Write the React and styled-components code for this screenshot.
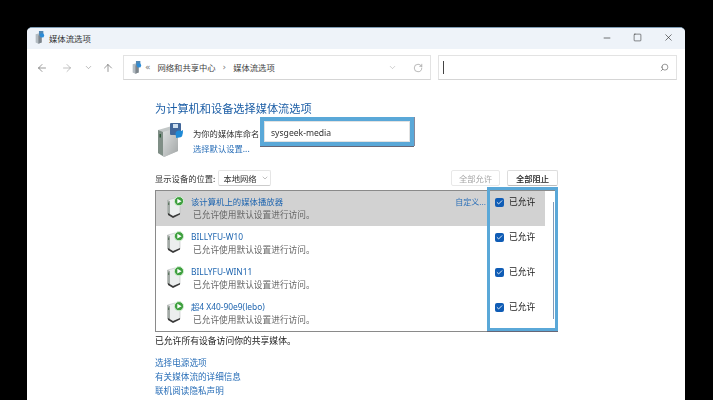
import React from 'react';
import styled, { createGlobalStyle } from 'styled-components';
import { ArrowLeft, ArrowRight, ArrowUp, ChevronDown, RotateCw, Search, Minus, Square, X, Check } from 'lucide-react';

const Global = createGlobalStyle`
  html, body { margin: 0; padding: 0; background: #000; height: 400px; overflow: hidden; }
  * { box-sizing: border-box; }
`;
const FONT = `"Noto Sans CJK SC", "Noto Sans", sans-serif`;

const Page = styled.div`
  width: 713px; height: 400px; padding: 27px 28px 0 27px; background: #000; overflow: hidden;
  font-family: ${FONT}; color: #222;
`;
const Win = styled.div`
  width: 658px; height: 373px; background: #fff; border-radius: 5px 5px 0 0; overflow: hidden;
  border-top: 1px solid #7f9db5; display: flex; flex-direction: column; filter: blur(0.3px);
`;
const TitleBar = styled.div`
  height: 21px; background: #eef3f9; display: flex; align-items: center; padding: 0 11px 2px 7px; flex: none;
`;
const TitleText = styled.span`font-size: 8.4px; line-height: 12px; margin-left: 4px; color: #333; flex: 1;`;
const WinBtns = styled.div`display: flex; align-items: center; gap: 21px; color: #222;`;

const Nav = styled.div`
  height: 25px; margin-top: 6px; display: flex; align-items: center; padding: 0 8px 0 9px; flex: none;
`;
const NavBtns = styled.div`width: 87px; display: flex; align-items: center; gap: 11px; flex: none; color: #666;`;
const NavIcon = styled.span`display: flex; color: ${p => p.$c || '#555'}; margin-left: ${p => p.$ml || 0}px;`;
const AddrBar = styled.div`
  width: 308px; height: 25px; border: 1px solid #e3e3e3; border-bottom-color: #d5d5d5; display: flex; align-items: center;
  padding: 0 7px 0 7px; font-size: 8.3px; color: #444; flex: none;
`;
const Crumbs = styled.div`display: flex; align-items: center; flex: 1; gap: 6px; line-height: 12px;`;
const Sep = styled.span`font-size: 9px; color: #777; font-family: "DejaVu Sans", sans-serif; margin: 0 ${p => p.$mr || 0}px 0 ${p => p.$ml || 0}px;`;
const SearchBox = styled.div`
  width: 239px; height: 25px; margin-left: 7px; border: 1px solid #e3e3e3; border-bottom-color: #d5d5d5; display: flex;
  align-items: center; justify-content: space-between; padding: 0 7px 0 4px; color: #555;
`;
const Caret = styled.span`width: 1px; height: 13px; background: #444;`;
const FlippedIcon = styled(NavIcon)`transform: scaleX(-1);`;

const Content = styled.div`padding: 20px 127px 0 128px; display: flex; flex-direction: column; position: relative; flex: 1;`;
const Heading = styled.h1`margin: 0; font-size: 11.2px; font-weight: 400; line-height: 16px; color: #1c5ea6;`;
const NameRow = styled.div`display: flex; margin-top: 1px; height: 45px; padding-left: 2px;`;
const BigIconSlot = styled.div`margin-top: 6px; flex: none; display: flex;`;
const NameText = styled.div`margin-left: 8px; padding-top: 10px; display: flex; flex-direction: column; width: 67px; flex: none;`;
const Small = styled.span`font-size: 8.3px; line-height: 12px; white-space: nowrap; color: #333;`;
const NameLink = styled.a`font-size: 8.3px; line-height: 12px; margin-top: 3px; color: #2a6fb8; white-space: nowrap;`;
const NameInputWrap = styled.div`
  width: 154px; height: 29px; border: 4px solid #5aa8d8; background: #fff; box-shadow: 0 1px 0 #667, 1px 0 0 #889;
  display: flex; align-items: center; padding: 2px 0 0 7px; font-size: 8.6px; color: #333; font-family: "Noto Sans", sans-serif;
  outline: 1px solid #e2e2e2; outline-offset: -5px;
`;
const LocRow = styled.div`display: flex; align-items: center; height: 16px; margin-top: 8px;`;
const LocSelect = styled.div`
  margin-left: 3px; width: 53px; height: 16px; border: 1px solid #e5e5e5; border-bottom-color: #ccc; border-radius: 2px;
  display: flex; align-items: center; justify-content: space-between; padding: 0 1px 0 4px; font-size: 8.3px; color: #333; line-height: 12px;
`;
const BtnSpacer = styled.div`flex: 1;`;
const Btn = styled.div`
  height: 16px; width: ${p => p.$w}px; margin-left: ${p => p.$ml || 0}px; border: 1px solid ${p => p.$off ? '#e8e8e8' : '#ddd'};
  border-bottom-color: ${p => p.$off ? '#e8e8e8' : '#bbb'}; border-radius: 2px; font-size: 8.3px; line-height: 14px; text-align: center;
  color: ${p => p.$off ? '#a5a5a5' : '#222'}; font-weight: ${p => p.$off ? 400 : 500};
`;
const List = styled.div`
  margin-top: 4px; width: 403px; height: 142px; border: 1px solid #8a8a8a; position: relative;
`;
const Row = styled.div`
  height: 35px; width: 389px; display: flex; padding: 5px 0 0 11px; background: ${p => p.$sel ? '#d2d2d2' : 'transparent'};
`;
const RowText = styled.div`margin-left: 6px; flex: 1; display: flex; flex-direction: column;`;
const RowName = styled.span`font-size: 8.4px; line-height: 12px; color: #2066b0; white-space: nowrap; font-family: "Noto Sans", "Noto Sans CJK SC", sans-serif;`;
const RowDesc = styled.span`font-size: 8.7px; line-height: 12px; margin-top: 1px; margin-left: 2px; color: #666; white-space: nowrap;`;
const Custom = styled.span`font-size: 8px; line-height: 12px; color: #2a6fb8; margin: 0 59px 0 0; white-space: nowrap;`;
const Highlight = styled.div`
  position: absolute; left: 331px; top: -4px; width: 71px; height: 144px; border: 3.5px solid #5aa8d8; box-shadow: 0 1px 0 #667;
  display: flex; flex-direction: column; padding-top: 1px;
`;
const AllowRow = styled.div`height: 35px; flex: none; display: flex; align-items: flex-start; padding: 5px 0 0 5px; gap: 5px; font-size: 8.8px; line-height: 12px; color: #222;`;
const Box = styled.span`
  width: 9px; height: 9px; margin-top: 2px; border-radius: 2px; background: #0f5cb5; display: flex; align-items: center; justify-content: center; color: #fff; flex: none;
`;
const ScrollThumb = styled.div`position: absolute; right: 1px; top: 12px; width: 1px; height: 117px; background: #7f9ab8;`;
const Note = styled.div`font-size: 8.8px; line-height: 12px; margin-top: 3px; color: #222;`;
const Links = styled.div`display: flex; flex-direction: column; margin-top: 9px; gap: 2px;`;
const Link = styled.a`font-size: 8.6px; line-height: 12px; color: #2a6fb8; white-space: nowrap;`;

const SmallIcon = ({ s = 11 }) => (
  <svg width={s} height={s * 1.15} viewBox="0 0 20 23" style={{ flex: 'none' }}>
    <path d="M3 6 L10 4 L14 6 V21 L8 23 L3 21 Z" fill="#b4bcc2" />
    <path d="M8 8 L14 6 V21 L8 23 Z" fill="#7d858c" />
    <rect x="9" y="0" width="8" height="8" fill="#4f87b5" />
    <circle cx="14.5" cy="8" r="4" fill="#2b8cd8" />
  </svg>
);
const BigIcon = () => (
  <svg width="28" height="34" viewBox="0 0 28 34" style={{ flex: 'none' }}>
    <defs>
      <linearGradient id="g1" x1="0" y1="0" x2="1" y2="1">
        <stop offset="0" stopColor="#dfe2e2" /><stop offset="1" stopColor="#a2a6a6" />
      </linearGradient>
    </defs>
    <path d="M1 7 L15 3 L21 5 V28 L7 34 L1 30 Z" fill="#c3c8c8" />
    <path d="M1 7 L6 9 V33 L1 30 Z" fill="#7f8e86" />
    <path d="M6 9 L21 5 V28 L7 34 L6 33 Z" fill="url(#g1)" />
    <rect x="2.5" y="11" width="1.5" height="3.5" fill="#2f5a3a" />
    <rect x="13" y="0" width="11" height="12" rx="1" fill="#42679a" />
    <rect x="16" y="1" width="5" height="4" fill="#cfe0ef" />
    <path d="M26 7 A7 7 0 0 1 19 15 L19 11 Z" fill="#1f8ad6" />
    <circle cx="22" cy="11" r="3.5" fill="#1f8ad6" />
  </svg>
);
const DeviceIcon = () => (
  <svg width="18" height="22" viewBox="0 0 18 22" style={{ flex: 'none' }}>
    <path d="M0.5 4 L8 2 L13 4 V18 L6 20.5 L0.5 18 Z" fill="#eceeee" stroke="#aeb2b2" strokeWidth=".5" />
    <path d="M0.5 4 L3 5 V19 L0.5 18 Z" fill="#a3aaa6" />
    <path d="M1 17 L6 20 L13 17 V18.5 L6 22 L1 19 Z" fill="#3a3a3a" />
    <rect x="1.2" y="6.5" width="1" height="2.5" fill="#4c6a50" />
    <circle cx="12" cy="5.2" r="4.6" fill="#3e9f3e" stroke="#d8f0d8" strokeWidth="1" />
    <path d="M10.3 2.8 L14.6 5.2 L10.3 7.6 Z" fill="#fff" />
  </svg>
);

const rows = [
  { name: '该计算机上的媒体播放器', sel: true },
  { name: 'BILLYFU-W10' },
  { name: 'BILLYFU-WIN11' },
  { name: '超4 X40-90e9(lebo)' },
];

export default function App() {
  return (
    <Page>
      <Global />
      <Win>
        <TitleBar>
          <SmallIcon />
          <TitleText>媒体流选项</TitleText>
          <WinBtns>
            <Minus size={10} strokeWidth={1.5} />
            <Square size={9} strokeWidth={1.4} />
            <X size={11} strokeWidth={1.3} />
          </WinBtns>
        </TitleBar>
        <Nav>
          <NavBtns>
            <NavIcon><ArrowLeft size={12} strokeWidth={1.2} /></NavIcon>
            <NavIcon $c="#999" $ml={2}><ArrowRight size={12} strokeWidth={1.2} /></NavIcon>
            <NavIcon $c="#777"><ChevronDown size={9} strokeWidth={1.3} /></NavIcon>
            <NavIcon $ml={-2}><ArrowUp size={12} strokeWidth={1.2} /></NavIcon>
          </NavBtns>
          <AddrBar>
            <Crumbs>
              <SmallIcon />
              <Sep $ml={-3} $mr={1}>«</Sep>
              <span>网络和共享中心</span>
              <Sep $ml={1} $mr={1}>›</Sep>
              <span>媒体流选项</span>
            </Crumbs>
            <NavIcon $c="#999"><ChevronDown size={9} strokeWidth={1.2} /></NavIcon>
            <NavIcon $c="#777" $ml={16}><RotateCw size={10} strokeWidth={1.2} /></NavIcon>
          </AddrBar>
          <SearchBox>
            <Caret />
            <FlippedIcon $c="#555"><Search size={9} strokeWidth={1.6} /></FlippedIcon>
          </SearchBox>
        </Nav>
        <Content>
          <Heading>为计算机和设备选择媒体流选项</Heading>
          <NameRow>
            <BigIconSlot><BigIcon /></BigIconSlot>
            <NameText>
              <Small>为你的媒体库命名:</Small>
              <NameLink>选择默认设置...</NameLink>
            </NameText>
            <NameInputWrap>sysgeek-media</NameInputWrap>
          </NameRow>
          <LocRow>
            <Small>显示设备的位置:</Small>
            <LocSelect>本地网络<ChevronDown size={8} strokeWidth={1.4} color="#777" /></LocSelect>
            <BtnSpacer />
            <Btn $off $w={49}>全部允许</Btn>
            <Btn $w={51} $ml={7}>全部阻止</Btn>
          </LocRow>
          <List>
            {rows.map(r => (
              <Row key={r.name} $sel={r.sel}>
                <DeviceIcon />
                <RowText>
                  <RowName>{r.name}</RowName>
                  <RowDesc>已允许使用默认设置进行访问。</RowDesc>
                </RowText>
                {r.sel && <Custom>自定义...</Custom>}
              </Row>
            ))}
            <Highlight>
              {rows.map(r => (
                <AllowRow key={r.name}>
                  <Box><Check size={7} strokeWidth={3} /></Box>已允许
                </AllowRow>
              ))}
              <ScrollThumb />
            </Highlight>
          </List>
          <Note>已允许所有设备访问你的共享媒体。</Note>
          <Links>
            <Link>选择电源选项</Link>
            <Link>有关媒体流的详细信息</Link>
            <Link>联机阅读隐私声明</Link>
          </Links>
        </Content>
      </Win>
    </Page>
  );
}
